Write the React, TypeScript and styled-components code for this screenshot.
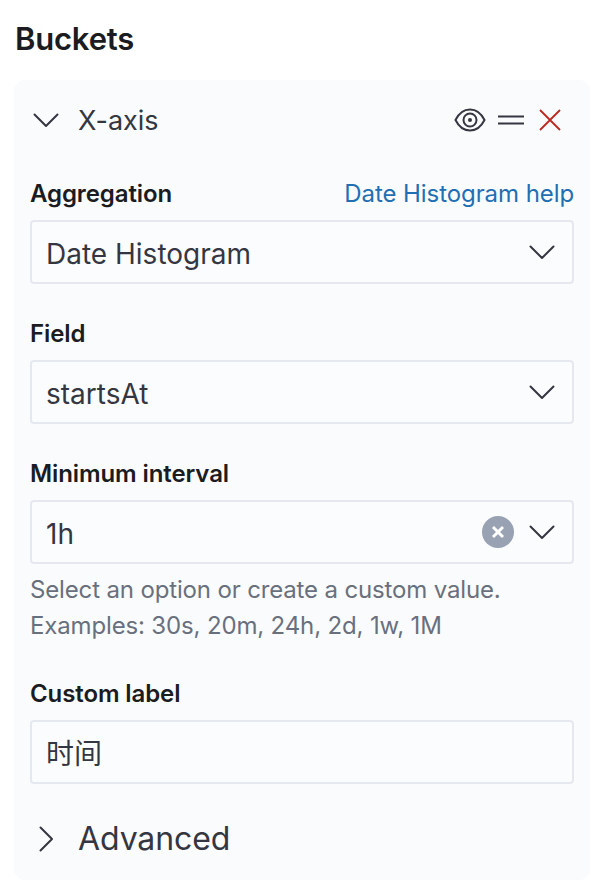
import React from 'react';
import styled, { createGlobalStyle } from 'styled-components';

const GlobalStyle = createGlobalStyle`
  html, body {
    margin: 0;
    padding: 0;
    background: #fff;
  }
  body {
    font-family: Inter, "Noto Sans CJK SC", sans-serif;
    color: #343741;
  }
`;

const Page = styled.div`
  width: 606px;
  height: 884px;
  box-sizing: border-box;
  padding: 20px 16px 4px 14px;
  overflow: hidden;
`;

const Title = styled.h2`
  margin: 0 0 0 1px;
  height: 60px;
  line-height: 38px;
  font-size: 31px;
  font-weight: 600;
  letter-spacing: -0.2px;
  color: #1a1c21;
`;

const Panel = styled.section`
  height: 800px;
  box-sizing: border-box;
  padding: 0 16px;
  background: #fafbfd;
  border-radius: 11px;
`;

const PanelHeader = styled.div`
  height: 80px;
  margin-bottom: 16px;
  display: flex;
  align-items: center;
  padding: 0 12px 0 3px;
`;

const Toggle = styled.div`
  width: 26px;
  height: 26px;
  margin-right: 19px;
  display: flex;
  align-items: center;
  justify-content: center;
`;

const PanelTitle = styled.span`
  padding-top: 1px;
  font-size: 27px;
  line-height: 32px;
  color: #343741;
`;

const Actions = styled.div`
  margin-left: auto;
  display: flex;
  align-items: center;
  gap: 12px;
`;

const Field = styled.div`
  margin-bottom: 32px;
`;

const LabelRow = styled.div`
  height: 34px;
  margin-bottom: 10px;
  display: flex;
  align-items: center;
  justify-content: space-between;
`;

const Label = styled.label`
  font-size: 24px;
  font-weight: 600;
  letter-spacing: -0.1px;
  color: #1a1c21;
`;

const HelpLink = styled.a`
  font-size: 24px;
  letter-spacing: -0.08px;
  color: #1f6fb2;
`;

const Control = styled.div`
  height: 64px;
  box-sizing: border-box;
  display: flex;
  align-items: center;
  padding: 0 17px 0 14px;
  background: #fbfcfd;
  border: 2px solid #e6e8f0;
  border-radius: 4px;
`;

const Value = styled.span`
  flex: 1;
  padding-top: 3px;
  font-size: 28px;
  line-height: 32px;
  color: #343741;
`;

const ClearButton = styled.div`
  width: 32px;
  height: 32px;
  margin-right: 15px;
  display: flex;
  align-items: center;
  justify-content: center;
  background: #98a2b3;
  border-radius: 50%;
`;

const Help = styled.div`
  margin-top: 8px;
  margin-bottom: 32px;
  font-size: 24px;
  letter-spacing: -0.15px;
  line-height: 36px;
  color: #69707d;
`;

const AdvancedRow = styled.div`
  display: flex;
  align-items: center;
  margin-top: 37px;
  padding-left: 3px;
`;

const AdvancedTitle = styled.span`
  font-size: 32px;
  line-height: 36px;
  letter-spacing: -0.1px;
  color: #343741;
`;

const Chevron = ({ dir = 'down' }: { dir?: 'down' | 'right' }) => (
  <svg width="26" height="26" viewBox="0 0 26 26" fill="none">
    <path
      d={dir === 'down' ? 'M1.5 7.5 L13 19 L24.5 7.5' : 'M7.5 1.5 L19 13 L7.5 24.5'}
      stroke="#343741"
      strokeWidth="2"
      strokeLinecap="round"
      strokeLinejoin="round"
    />
  </svg>
);

const EyeIcon = () => (
  <svg width="32" height="26" viewBox="0 0 32 26" fill="none" stroke="#343741" strokeWidth="2">
    <path d="M1.5 13 C5 6 10 2.5 16 2.5 C22 2.5 27 6 30.5 13 C27 20 22 23.5 16 23.5 C10 23.5 5 20 1.5 13 Z" />
    <circle cx="16" cy="13" r="6.5" />
    <circle cx="16" cy="13" r="2" fill="#343741" stroke="none" />
  </svg>
);

const DragIcon = () => (
  <svg width="28" height="14" viewBox="0 0 28 14" fill="none" stroke="#343741" strokeWidth="2">
    <path d="M0 3.5 H26 M0 10.5 H26" />
  </svg>
);

const CloseIcon = () => (
  <svg width="24" height="24" viewBox="0 0 24 24" fill="none" stroke="#bd271e" strokeWidth="1.8">
    <path d="M2 2 L22 22 M22 2 L2 22" />
  </svg>
);

const ClearIcon = () => (
  <svg width="14" height="14" viewBox="0 0 14 14" fill="none" stroke="#fff" strokeWidth="3">
    <path d="M2 2 L12 12 M12 2 L2 12" />
  </svg>
);

export default function App() {
  return (
    <Page>
      <GlobalStyle />
      <Title>Buckets</Title>
      <Panel>
        <PanelHeader>
          <Toggle>
            <Chevron />
          </Toggle>
          <PanelTitle>X-axis</PanelTitle>
          <Actions>
            <EyeIcon />
            <DragIcon />
            <CloseIcon />
          </Actions>
        </PanelHeader>

        <Field>
          <LabelRow>
            <Label>Aggregation</Label>
            <HelpLink>Date Histogram help</HelpLink>
          </LabelRow>
          <Control>
            <Value>Date Histogram</Value>
            <Chevron />
          </Control>
        </Field>

        <Field>
          <LabelRow>
            <Label>Field</Label>
          </LabelRow>
          <Control>
            <Value>startsAt</Value>
            <Chevron />
          </Control>
        </Field>

        <div>
          <LabelRow>
            <Label>Minimum interval</Label>
          </LabelRow>
          <Control>
            <Value>1h</Value>
            <ClearButton>
              <ClearIcon />
            </ClearButton>
            <Chevron />
          </Control>
          <Help>
            Select an option or create a custom value.
            <br />
            Examples: 30s, 20m, 24h, 2d, 1w, 1M
          </Help>
        </div>

        <div>
          <LabelRow>
            <Label>Custom label</Label>
          </LabelRow>
          <Control>
            <Value>时间</Value>
          </Control>
        </div>

        <AdvancedRow>
          <Toggle>
            <Chevron dir="right" />
          </Toggle>
          <AdvancedTitle>Advanced</AdvancedTitle>
        </AdvancedRow>
      </Panel>
    </Page>
  );
}
